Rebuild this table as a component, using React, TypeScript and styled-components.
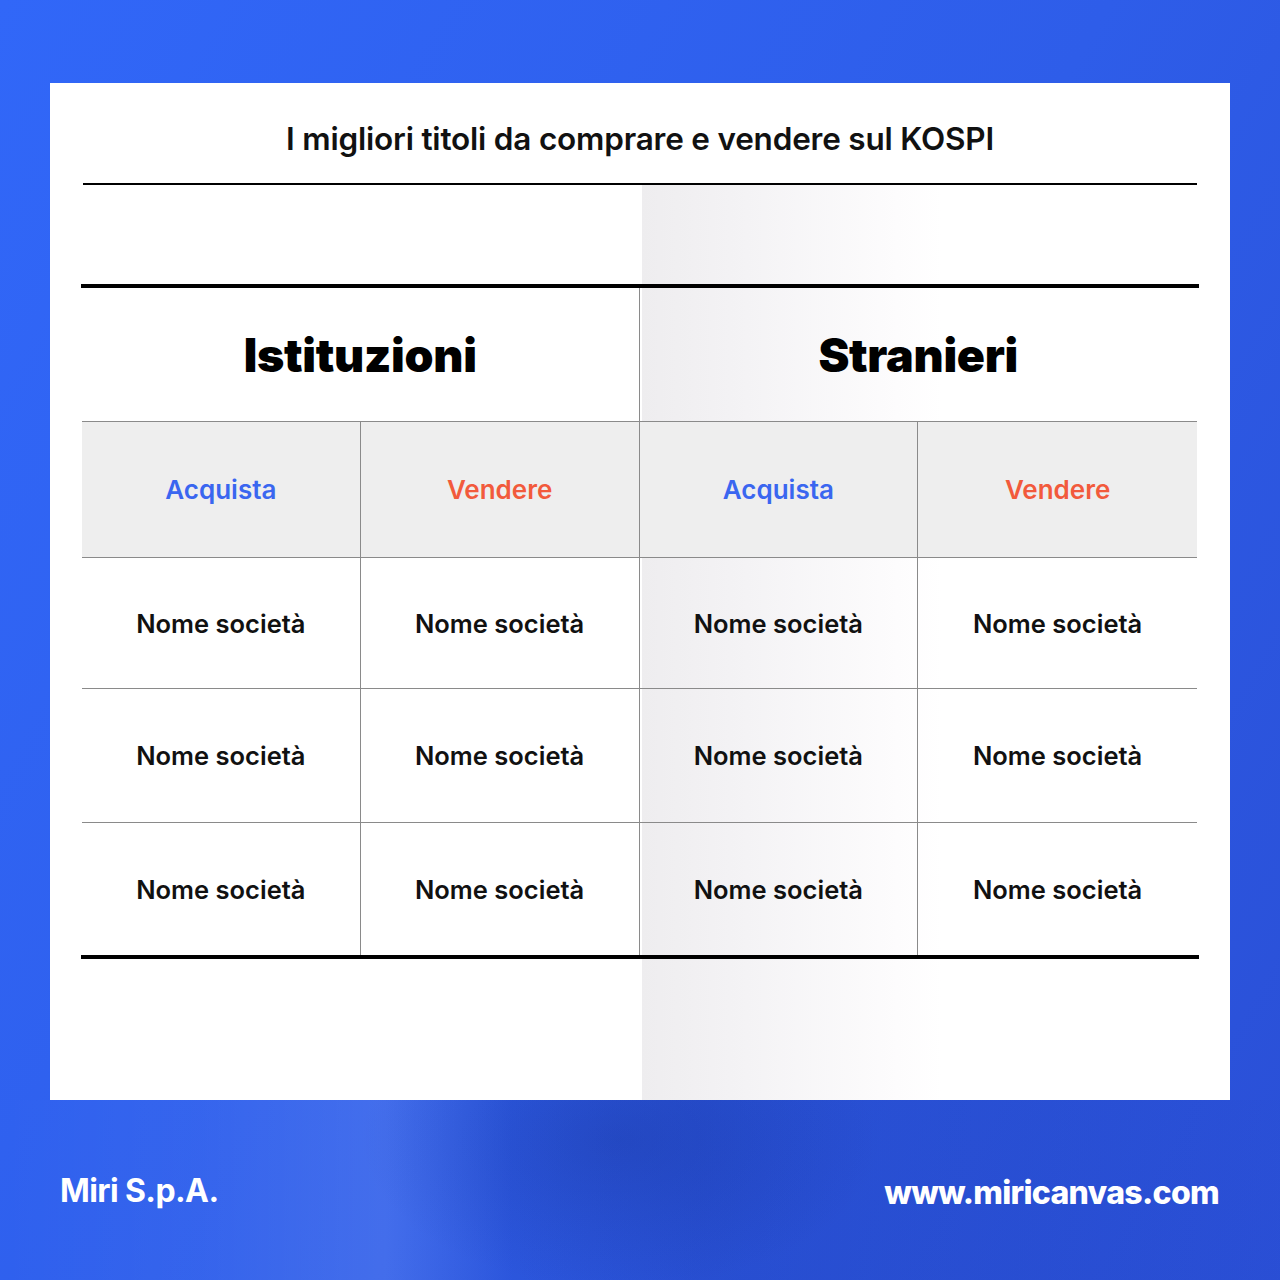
import styled, { createGlobalStyle } from "styled-components";

const GlobalStyle = createGlobalStyle`
  html, body {
    margin: 0;
    padding: 0;
  }
  body {
    font-family: Inter, "Noto Sans", "Liberation Sans", sans-serif;
  }
`;

const Page = styled.div`
  width: 1280px;
  height: 1280px;
  display: flex;
  flex-direction: column;
  align-items: center;
  padding-top: 83px;
  box-sizing: border-box;
  background: linear-gradient(120deg, #3167f8 0%, #2e5de9 55%, #2a4fd6 100%);
`;

const Card = styled.div`
  width: 1180px;
  height: 1017px;
  box-sizing: border-box;
  padding: 0 31px;
  display: flex;
  flex-direction: column;
  background:
    linear-gradient(90deg, #eeedef 0%, #f4f3f5 35%, #fdfcfd 85%, #ffffff 100%)
      no-repeat 592px 102px / 300px 915px,
    #ffffff;
`;

const Title = styled.h1`
  margin: 0;
  height: 100px;
  padding-top: 10px;
  box-sizing: border-box;
  display: flex;
  align-items: center;
  justify-content: center;
  font-size: 31.5px;
  font-weight: 600;
  color: #111;
  letter-spacing: -0.2px;
`;

const Rule = styled.div<{ $thick?: boolean; $inset?: number }>`
  height: ${(p) => (p.$thick ? "4px" : "2px")};
  margin: 0 ${(p) => p.$inset ?? 0}px;
  background: #000;
`;

const Spacer = styled.div`
  height: 99px;
`;

const Grid = styled.div`
  display: grid;
  grid-template-columns: repeat(4, 1fr);
  margin: 0 2px 0 1px;
`;

const GroupCell = styled.div<{ $left?: boolean }>`
  grid-column: span 2;
  height: 133px;
  display: flex;
  align-items: center;
  justify-content: center;
  font-size: 46.5px;
  font-weight: 900;
  color: #000;
  letter-spacing: -0.3px;
  border-bottom: 1px solid #8a8a8a;
  border-right: ${(p) => (p.$left ? "1px solid #8a8a8a" : "none")};
`;

const HeadCell = styled.div<{ $kind: "buy" | "sell"; $last?: boolean }>`
  height: 135px;
  display: flex;
  align-items: center;
  justify-content: center;
  background: #eeeeee;
  font-size: 26px;
  font-weight: 600;
  color: ${(p) => (p.$kind === "buy" ? "#3a66f0" : "#f25a3c")};
  border-bottom: 1px solid #8a8a8a;
  border-right: ${(p) => (p.$last ? "none" : "1px solid #8a8a8a")};
`;

const BodyCell = styled.div<{ $last?: boolean; $lastRow?: boolean; $h: number }>`
  height: ${(p) => p.$h}px;
  display: flex;
  align-items: center;
  justify-content: center;
  font-size: 25.5px;
  font-weight: 600;
  color: #111;
  border-bottom: ${(p) => (p.$lastRow ? "none" : "1px solid #8a8a8a")};
  border-right: ${(p) => (p.$last ? "none" : "1px solid #8a8a8a")};
`;

const Footer = styled.div`
  flex: 1;
  width: 1280px;
  box-sizing: border-box;
  padding: 0 61px 0 60px;
  display: flex;
  align-items: center;
  justify-content: space-between;
  color: #fff;
  background:
    radial-gradient(ellipse 260px 150px at 620px 40px, rgba(15, 35, 120, 0.22), rgba(15, 35, 120, 0)),
    linear-gradient(
      90deg,
      rgba(255, 255, 255, 0) 0%,
      rgba(255, 255, 255, 0.03) 15%,
      rgba(255, 255, 255, 0.1) 30%,
      rgba(30, 50, 150, 0.12) 40%,
      rgba(20, 40, 140, 0.2) 55%,
      rgba(20, 40, 140, 0.12) 80%,
      rgba(20, 40, 140, 0.02) 100%
    );
`;

const Brand = styled.div`
  font-size: 32px;
  font-weight: 700;
  letter-spacing: -0.6px;
`;

const Site = styled.div`
  font-size: 32px;
  font-weight: 800;
  letter-spacing: -0.7px;
  margin-top: 4px;
`;

const groups = ["Istituzioni", "Stranieri"];
const rowHeights = [130, 133, 132];

const App = () => {
  return (
    <>
      <GlobalStyle />
      <Page>
        <Card>
          <Title>I migliori titoli da comprare e vendere sul KOSPI</Title>
          <Rule $inset={2} />
          <Spacer />
          <Rule $thick />
          <Grid>
            {groups.map((g, i) => (
              <GroupCell key={g} $left={i === 0}>
                {g}
              </GroupCell>
            ))}
            {[0, 1, 2, 3].map((c) => (
              <HeadCell key={c} $kind={c % 2 === 0 ? "buy" : "sell"} $last={c === 3}>
                {c % 2 === 0 ? "Acquista" : "Vendere"}
              </HeadCell>
            ))}
            {rowHeights.map((h, r) =>
              [0, 1, 2, 3].map((c) => (
                <BodyCell key={`${r}-${c}`} $h={h} $last={c === 3} $lastRow={r === 2}>
                  Nome società
                </BodyCell>
              ))
            )}
          </Grid>
          <Rule $thick />
        </Card>
        <Footer>
          <Brand>Miri S.p.A.</Brand>
          <Site>www.miricanvas.com</Site>
        </Footer>
      </Page>
    </>
  );
};

export default App;
